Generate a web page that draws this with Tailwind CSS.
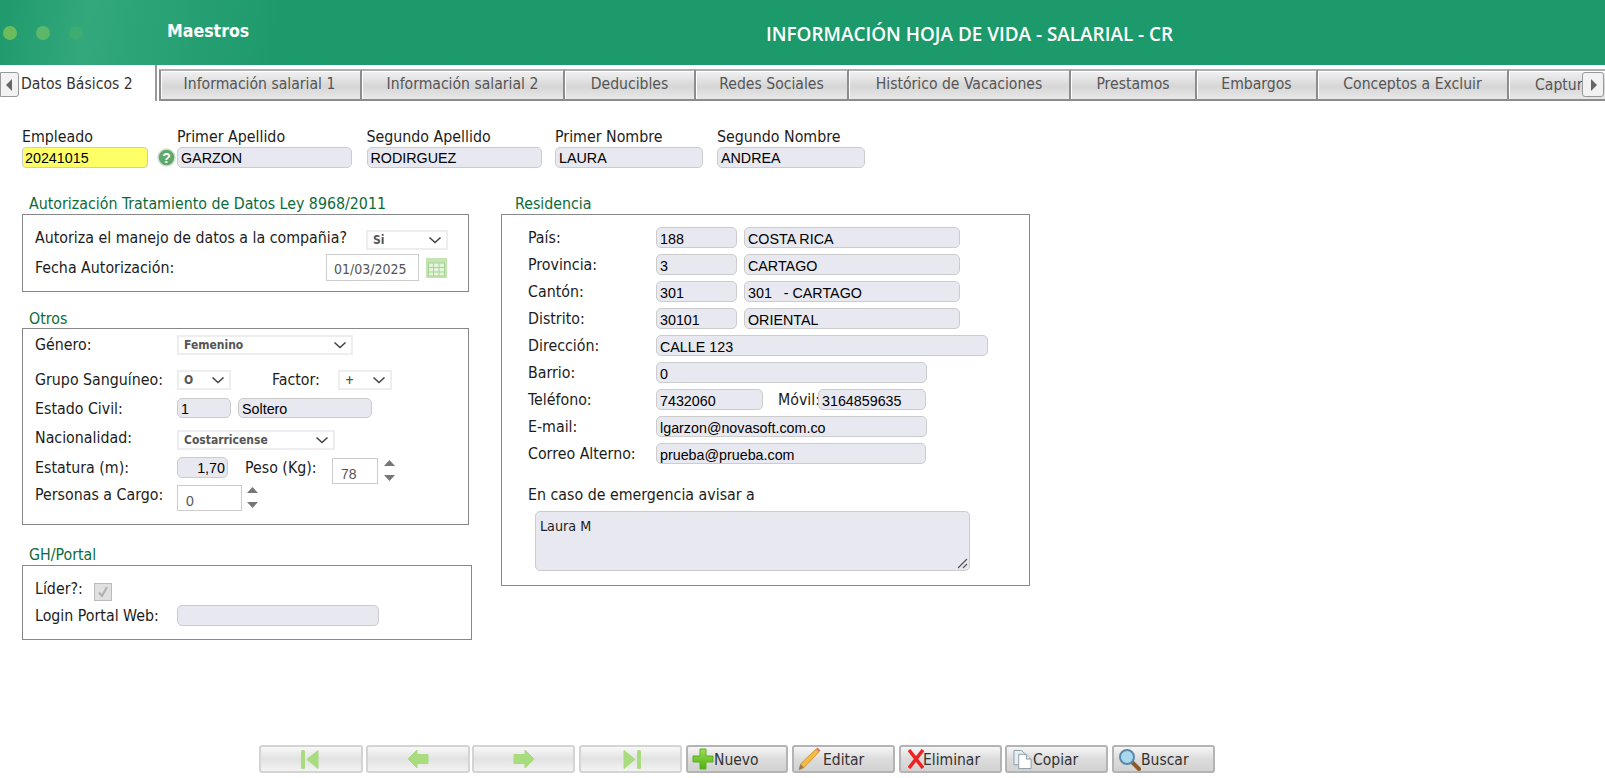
<!DOCTYPE html>
<html lang="es">
<head>
<meta charset="UTF-8">
<title>Información Hoja de Vida - Salarial - CR</title>
<script src="https://cdn.jsdelivr.net/npm/@tailwindcss/browser@4"></script>
</head>
<body class="bg-white h-[778px] overflow-hidden relative font-['DejaVu_Sans','Liberation_Sans',sans-serif] font-stretch-condensed text-[15.8px] text-[#1c1c1c]">

<!-- header -->
<header class="h-[65px] flex items-center bg-[linear-gradient(100deg,#1f9a6c_0px,#33a87c_90px,#2ba377_150px,#1d9a6b_280px)] relative">
  <div class="flex gap-[19px] pl-[3px] w-[167px]">
    <span class="w-[14px] h-[14px] rounded-full bg-[#6cbc5c]"></span>
    <span class="w-[14px] h-[14px] rounded-full bg-[#5cb868]"></span>
    <span class="w-[14px] h-[14px] rounded-full bg-[#3dac70]"></span>
  </div>
  <span class="text-white font-bold text-[17.6px] -mt-[3px]">Maestros</span>
  <h1 class="absolute left-[766px] top-[20px] text-white font-semibold text-[18.9px] font-['Open_Sans',sans-serif] font-stretch-normal whitespace-nowrap">INFORMACIÓN HOJA DE VIDA - SALARIAL - CR</h1>
</header>

<!-- tabs -->
<nav class="h-[36px] relative overflow-hidden flex items-end text-[15.6px] text-[#555]">
  <div class="w-[157px] h-[36px] shrink-0 bg-white border-r-2 border-r-[#999] pl-[21px] pt-[8px] text-[#333]">Datos Básicos 2</div>
  <div class="w-[2px] shrink-0"></div>
  <div class="w-[203px] h-[32px] shrink-0 flex items-center justify-center pr-[2px] border-2 border-[#8c8c8c] border-t-[#b0b0b0] shadow-[inset_1px_1px_0_#fff] bg-[linear-gradient(#f2f2f2,#d6d6d6_55%,#e8e8e8)]">Información salarial 1</div>
  <div class="w-[203px] h-[32px] shrink-0 flex items-center justify-center border-2 border-l-0 border-[#8c8c8c] border-t-[#b0b0b0] shadow-[inset_1px_1px_0_#fff] bg-[linear-gradient(#f2f2f2,#d6d6d6_55%,#e8e8e8)]">Información salarial 2</div>
  <div class="w-[131px] h-[32px] shrink-0 flex items-center justify-center border-2 border-l-0 border-[#8c8c8c] border-t-[#b0b0b0] shadow-[inset_1px_1px_0_#fff] bg-[linear-gradient(#f2f2f2,#d6d6d6_55%,#e8e8e8)]">Deducibles</div>
  <div class="w-[153px] h-[32px] shrink-0 flex items-center justify-center border-2 border-l-0 border-[#8c8c8c] border-t-[#b0b0b0] shadow-[inset_1px_1px_0_#fff] bg-[linear-gradient(#f2f2f2,#d6d6d6_55%,#e8e8e8)]">Redes Sociales</div>
  <div class="w-[222px] h-[32px] shrink-0 flex items-center justify-center border-2 border-l-0 border-[#8c8c8c] border-t-[#b0b0b0] shadow-[inset_1px_1px_0_#fff] bg-[linear-gradient(#f2f2f2,#d6d6d6_55%,#e8e8e8)]">Histórico de Vacaciones</div>
  <div class="w-[126px] h-[32px] shrink-0 flex items-center justify-center border-2 border-l-0 border-[#8c8c8c] border-t-[#b0b0b0] shadow-[inset_1px_1px_0_#fff] bg-[linear-gradient(#f2f2f2,#d6d6d6_55%,#e8e8e8)]">Prestamos</div>
  <div class="w-[121px] h-[32px] shrink-0 flex items-center justify-center border-2 border-l-0 border-[#8c8c8c] border-t-[#b0b0b0] shadow-[inset_1px_1px_0_#fff] bg-[linear-gradient(#f2f2f2,#d6d6d6_55%,#e8e8e8)]">Embargos</div>
  <div class="w-[191px] h-[32px] shrink-0 flex items-center justify-center border-2 border-l-0 border-[#8c8c8c] border-t-[#b0b0b0] shadow-[inset_1px_1px_0_#fff] bg-[linear-gradient(#f2f2f2,#d6d6d6_55%,#e8e8e8)]">Conceptos a Excluir</div>
  <div class="w-[120px] h-[32px] shrink-0 pl-[26px] pt-[3px] border-2 border-l-0 border-r-0 border-[#8c8c8c] border-t-[#b0b0b0] shadow-[inset_1px_1px_0_#fff] bg-[linear-gradient(#f2f2f2,#d6d6d6_55%,#e8e8e8)]">Capturas</div>
  <button class="absolute left-0 top-[7px] w-[19px] h-[25px] bg-[#f2f2f2] border border-[#999] rounded-r-[3px] flex items-center justify-center"><svg width="7" height="12" viewBox="0 0 7 12"><path d="M6 0v12L0 6z" fill="#666"/></svg></button>
  <button class="absolute left-[1582px] top-[7px] w-[22px] h-[25px] bg-[#f2f2f2] border border-[#999] rounded-[3px] flex items-center justify-center"><svg width="7" height="12" viewBox="0 0 7 12"><path d="M1 0v12l6-6z" fill="#666"/></svg></button>
</nav>

<main class="relative">
  <!-- empleado -->
  <section class="flex pl-[22px] pt-[26px] h-[93px]">
    <div class="w-[135px]">
      <div class="h-[20px] leading-[20px]">Empleado</div>
      <div class="w-[126px] h-[21px] rounded-[4px] border border-[#ccc] bg-[#ffff66] pl-[2px] font-['Liberation_Sans',sans-serif] font-stretch-normal text-[14.3px] text-black leading-[21px]">20241015</div>
    </div>
    <div class="w-[20px] pt-[20px]">
      <svg width="19" height="21" viewBox="0 0 19 21"><circle cx="9.500" cy="10.500" r="8.500" fill="#5fa86c" stroke="#cfe3d0" stroke-width="1.500"/><text x="9.500" y="15.500" font-size="14" font-weight="700" text-anchor="middle" fill="#fff" font-family="Liberation Sans">?</text></svg>
    </div>
    <div class="w-[189.5px]">
      <div class="h-[20px] leading-[20px]">Primer Apellido</div>
      <div class="w-[175px] h-[21px] rounded-[5px] border border-[#ccc] bg-[#e8e8f0] pl-[3px] font-['Liberation_Sans',sans-serif] font-stretch-normal text-[14.3px] text-black leading-[21px]">GARZON</div>
    </div>
    <div class="w-[188.5px]">
      <div class="h-[20px] leading-[20px]">Segundo Apellido</div>
      <div class="w-[175px] h-[21px] rounded-[5px] border border-[#ccc] bg-[#e8e8f0] pl-[3px] font-['Liberation_Sans',sans-serif] font-stretch-normal text-[14.3px] text-black leading-[21px]">RODIRGUEZ</div>
    </div>
    <div class="w-[162px]">
      <div class="h-[20px] leading-[20px]">Primer Nombre</div>
      <div class="w-[148px] h-[21px] rounded-[5px] border border-[#ccc] bg-[#e8e8f0] pl-[3px] font-['Liberation_Sans',sans-serif] font-stretch-normal text-[14.3px] text-black leading-[21px]">LAURA</div>
    </div>
    <div class="w-[150px]">
      <div class="h-[20px] leading-[20px]">Segundo Nombre</div>
      <div class="w-[148px] h-[21px] rounded-[5px] border border-[#ccc] bg-[#e8e8f0] pl-[3px] font-['Liberation_Sans',sans-serif] font-stretch-normal text-[14.3px] text-black leading-[21px]">ANDREA</div>
    </div>
  </section>

  <section class="flex items-start">
    <!-- left column -->
    <div class="w-[501px] pl-[22px]">
      <div class="pl-[7px] text-[#0b6b3a] h-[20px] leading-[20px]">Autorización Tratamiento de Datos Ley 8968/2011</div>
      <div class="w-[447px] h-[78px] border border-[#888] pl-[12px] relative">
        <div class="flex items-start pt-[7px] h-[35px]">
          <span class="w-[331px] h-[20px] leading-[20px] mt-[6px] whitespace-nowrap">Autoriza el manejo de datos a la compañia?</span>
          <span class="w-[82px] h-[20px] mt-[8px] border-2 border-[#eee] bg-white flex items-center justify-between pl-[5px] pr-[4px] text-[12px] font-bold text-[#555]">Si<svg width="14" height="8" viewBox="0 0 14 8"><path d="M1.500 1.500 7 6.500l5.500-5" fill="none" stroke="#444" stroke-width="1.600"/></svg></span>
        </div>
        <div class="flex items-start mt-[3px]">
          <span class="w-[291px] h-[20px] leading-[20px] mt-[5px]">Fecha Autorización:</span>
          <span class="w-[93px] h-[27px] mt-[1px] border border-[#ccc] bg-white text-[#555] text-[14px] pl-[7px] leading-[29px]">01/03/2025</span>
          <svg class="ml-[7px] mt-[5px]" width="21" height="20" viewBox="0 0 21 20"><rect width="21" height="20" fill="#c4e4b4"/><rect x="2.500" y="5" width="16" height="13" fill="#e6f4dc" stroke="#a4d494"/><path d="M7.500 5v13M13 5v13M2.500 9.500h16M2.500 14h16" stroke="#a4d494"/></svg>
        </div>
      </div>

      <div class="h-[17px]"></div>
      <div class="pl-[7px] text-[#0b6b3a] h-[19px] leading-[19px]">Otros</div>
      <div class="w-[447px] h-[197px] border border-[#888] pl-[12px] relative">
        <div class="flex items-center h-[20px] mt-[6px]">
          <span class="w-[142px]">Género:</span>
          <span class="w-[176px] h-[20px] border-2 border-[#eee] bg-white flex items-center justify-between pl-[5px] pr-[4px] text-[12px] font-bold text-[#555]">Femenino<svg width="14" height="8" viewBox="0 0 14 8"><path d="M1.500 1.500 7 6.500l5.500-5" fill="none" stroke="#444" stroke-width="1.600"/></svg></span>
        </div>
        <div class="flex items-center h-[20px] mt-[15px]">
          <span class="w-[142px]">Grupo Sanguíneo:</span>
          <span class="w-[54px] h-[20px] border-2 border-[#eee] bg-white flex items-center justify-between pl-[5px] pr-[4px] text-[12px] font-bold text-[#555]">O<svg width="14" height="8" viewBox="0 0 14 8"><path d="M1.500 1.500 7 6.500l5.500-5" fill="none" stroke="#444" stroke-width="1.600"/></svg></span>
          <span class="w-[66px] ml-[41px]">Factor:</span>
          <span class="w-[54px] h-[20px] border-2 border-[#eee] bg-white flex items-center justify-between pl-[5px] pr-[4px] text-[12px] font-bold text-[#555]">+<svg width="14" height="8" viewBox="0 0 14 8"><path d="M1.500 1.500 7 6.500l5.500-5" fill="none" stroke="#444" stroke-width="1.600"/></svg></span>
        </div>
        <div class="flex items-center h-[21px] mt-[7px]">
          <span class="w-[142px] mt-[2px]">Estado Civil:</span>
          <span class="w-[54px] h-[20px] rounded-[5px] border border-[#ccc] bg-[#e8e8f0] pl-[3px] font-['Liberation_Sans',sans-serif] font-stretch-normal text-[14.3px] text-black leading-[20px]">1</span>
          <span class="w-[134px] h-[20px] ml-[7px] rounded-[5px] border border-[#ccc] bg-[#e8e8f0] pl-[3px] font-['Liberation_Sans',sans-serif] font-stretch-normal text-[14.3px] text-black leading-[20px]">Soltero</span>
        </div>
        <div class="flex items-center h-[20px] mt-[11px]">
          <span class="w-[142px] -mt-[2px]">Nacionalidad:</span>
          <span class="w-[158px] h-[20px] mt-[2px] border-2 border-[#eee] bg-white flex items-center justify-between pl-[5px] pr-[4px] text-[12px] font-bold text-[#555]">Costarricense<svg width="14" height="8" viewBox="0 0 14 8"><path d="M1.500 1.500 7 6.500l5.500-5" fill="none" stroke="#444" stroke-width="1.600"/></svg></span>
        </div>
        <div class="flex items-start h-[28px] mt-[8px]">
          <span class="w-[142px] h-[20px] leading-[20px] mt-[1px]">Estatura (m):</span>
          <span class="w-[51px] h-[21px] rounded-[5px] border border-[#ccc] bg-[#e8e8f0] pr-[2px] text-right font-['Liberation_Sans',sans-serif] font-stretch-normal text-[14.3px] text-black leading-[21px]">1,70</span>
          <span class="ml-[17px] w-[87px] h-[20px] leading-[20px] mt-[1px]">Peso (Kg):</span>
          <span class="w-[46px] h-[26px] mt-[1px] border border-[#ccc] bg-white pl-[8px] text-[#555] font-['Liberation_Sans',sans-serif] font-stretch-normal text-[14px] leading-[30px]">78</span>
          <svg class="ml-[6px] mt-[3px]" width="11" height="21" viewBox="0 0 11 21"><path d="M5.500 0 11 6H0zM0 15h11l-5.500 6z" fill="#777"/></svg>
        </div>
        <div class="flex items-start h-[26px]">
          <span class="w-[142px] h-[20px] leading-[20px] whitespace-nowrap">Personas a Cargo:</span>
          <span class="w-[65px] h-[26px] border border-[#ccc] bg-white pl-[8px] text-[#555] font-['Liberation_Sans',sans-serif] font-stretch-normal text-[14px] leading-[30px]">0</span>
          <svg class="ml-[5px] mt-[2px]" width="11" height="21" viewBox="0 0 11 21"><path d="M5.500 0 11 6H0zM0 15h11l-5.500 6z" fill="#777"/></svg>
        </div>
      </div>

      <div class="h-[19px]"></div>
      <div class="pl-[7px] text-[#0b6b3a] h-[21px] leading-[22px]">GH/Portal</div>
      <div class="w-[450px] h-[75px] border border-[#888] pl-[12px]">
        <div class="flex items-start h-[34px] pt-[12px]">
          <span class="w-[59px] h-[20px] leading-[20px] mt-[1px]">Líder?:</span>
          <span class="w-[18px] h-[18px] mt-[5px] border border-[#bbb] bg-[#e0e0e0] flex items-center justify-center"><svg width="14" height="14" viewBox="0 0 14 14"><path d="M3 7.500 6 11l5-9" fill="none" stroke="#b0b0b0" stroke-width="2"/></svg></span>
        </div>
        <div class="flex items-center h-[21px] mt-[5px]">
          <span class="w-[142px] whitespace-nowrap">Login Portal Web:</span>
          <span class="w-[202px] h-[21px] rounded-[5px] border border-[#ccc] bg-[#e8e8f0]"></span>
        </div>
      </div>
    </div>

    <!-- residencia -->
    <div class="w-[529px]">
      <div class="pl-[14px] text-[#0b6b3a] h-[20px] leading-[20px]">Residencia</div>
      <div class="h-[372px] border border-[#888] pl-[26px] pt-[12px] flex flex-col">
        <div class="flex h-[21px] items-center mb-[6px]"><span class="w-[128px]">País:</span><span class="w-[81px] h-[21px] rounded-[5px] border border-[#ccc] bg-[#e8e8f0] pl-[3px] font-['Liberation_Sans',sans-serif] font-stretch-normal text-[14.3px] text-black leading-[22px]">188</span><span class="ml-[7px] w-[216px] h-[21px] rounded-[5px] border border-[#ccc] bg-[#e8e8f0] pl-[3px] font-['Liberation_Sans',sans-serif] font-stretch-normal text-[14.3px] text-black leading-[22px]">COSTA RICA</span></div>
        <div class="flex h-[21px] items-center mb-[6px]"><span class="w-[128px]">Provincia:</span><span class="w-[81px] h-[21px] rounded-[5px] border border-[#ccc] bg-[#e8e8f0] pl-[3px] font-['Liberation_Sans',sans-serif] font-stretch-normal text-[14.3px] text-black leading-[22px]">3</span><span class="ml-[7px] w-[216px] h-[21px] rounded-[5px] border border-[#ccc] bg-[#e8e8f0] pl-[3px] font-['Liberation_Sans',sans-serif] font-stretch-normal text-[14.3px] text-black leading-[22px]">CARTAGO</span></div>
        <div class="flex h-[21px] items-center mb-[6px]"><span class="w-[128px]">Cantón:</span><span class="w-[81px] h-[21px] rounded-[5px] border border-[#ccc] bg-[#e8e8f0] pl-[3px] font-['Liberation_Sans',sans-serif] font-stretch-normal text-[14.3px] text-black leading-[22px]">301</span><span class="ml-[7px] w-[216px] h-[21px] rounded-[5px] border border-[#ccc] bg-[#e8e8f0] pl-[3px] font-['Liberation_Sans',sans-serif] font-stretch-normal text-[14.3px] text-black leading-[22px] whitespace-pre">301   - CARTAGO</span></div>
        <div class="flex h-[21px] items-center mb-[6px]"><span class="w-[128px]">Distrito:</span><span class="w-[81px] h-[21px] rounded-[5px] border border-[#ccc] bg-[#e8e8f0] pl-[3px] font-['Liberation_Sans',sans-serif] font-stretch-normal text-[14.3px] text-black leading-[22px]">30101</span><span class="ml-[7px] w-[216px] h-[21px] rounded-[5px] border border-[#ccc] bg-[#e8e8f0] pl-[3px] font-['Liberation_Sans',sans-serif] font-stretch-normal text-[14.3px] text-black leading-[22px]">ORIENTAL</span></div>
        <div class="flex h-[21px] items-center mb-[6px]"><span class="w-[128px]">Dirección:</span><span class="w-[332px] h-[21px] rounded-[5px] border border-[#ccc] bg-[#e8e8f0] pl-[3px] font-['Liberation_Sans',sans-serif] font-stretch-normal text-[14.3px] text-black leading-[22px]">CALLE 123</span></div>
        <div class="flex h-[21px] items-center mb-[6px]"><span class="w-[128px]">Barrio:</span><span class="w-[271px] h-[21px] rounded-[5px] border border-[#ccc] bg-[#e8e8f0] pl-[3px] font-['Liberation_Sans',sans-serif] font-stretch-normal text-[14.3px] text-black leading-[22px]">0</span></div>
        <div class="flex h-[21px] items-center mb-[6px]"><span class="w-[128px]">Teléfono:</span><span class="w-[107px] h-[21px] rounded-[5px] border border-[#ccc] bg-[#e8e8f0] pl-[3px] font-['Liberation_Sans',sans-serif] font-stretch-normal text-[14.3px] text-black leading-[22px]">7432060</span><span class="ml-[15px] w-[40px] whitespace-nowrap">Móvil:</span><span class="w-[108px] h-[21px] rounded-[5px] border border-[#ccc] bg-[#e8e8f0] pl-[3px] font-['Liberation_Sans',sans-serif] font-stretch-normal text-[14.3px] text-black leading-[22px] relative">3164859635</span></div>
        <div class="flex h-[21px] items-center mb-[6px]"><span class="w-[128px]">E-mail:</span><span class="w-[271px] h-[21px] rounded-[5px] border border-[#ccc] bg-[#e8e8f0] pl-[3px] font-['Liberation_Sans',sans-serif] font-stretch-normal text-[14.3px] text-black leading-[22px]">lgarzon@novasoft.com.co</span></div>
        <div class="flex h-[21px] items-center"><span class="w-[128px] whitespace-nowrap">Correo Alterno:</span><span class="w-[270px] h-[21px] rounded-[5px] border border-[#ccc] bg-[#e8e8f0] pl-[3px] font-['Liberation_Sans',sans-serif] font-stretch-normal text-[14.3px] text-black leading-[22px]">prueba@prueba.com</span></div>
        <div class="mt-[21px] h-[20px] leading-[20px]">En caso de emergencia avisar a</div>
        <div class="relative ml-[7px] mt-[6px] w-[435px] h-[60px] rounded-[5px] border border-[#ccc] bg-[#e8e8f0] pl-[4px] pt-[6px] text-[14.2px] leading-[16px] text-[#222]">Laura M
          <svg class="absolute right-[1px] bottom-[1px]" width="11" height="11" viewBox="0 0 11 11"><path d="M1 10 10 1M6 10l4-4" stroke="#555" stroke-width="1.200"/></svg>
        </div>
      </div>
    </div>
  </section>
</main>

<!-- toolbar -->
<footer class="absolute left-[259px] top-[745px] flex h-[28px] text-[15.5px] text-[#333]">
  <button class="w-[104px] h-[28px] mr-[3px] rounded-[3px] border-2 border-[#d4d4d4] bg-[linear-gradient(#f8f8f8,#e2e2e2_50%,#f2f2f2)] flex items-center justify-center"><svg width="22" height="21" viewBox="0 0 22 21"><rect x="1" y="1" width="4" height="19" rx="1.500" fill="#a8dc7e"/><path d="M7 10.500 18 1.500v18z" fill="#a8dc7e" stroke="#a8dc7e" stroke-linejoin="round"/></svg></button>
  <button class="w-[104px] h-[28px] mr-[2px] rounded-[3px] border-2 border-[#d4d4d4] bg-[linear-gradient(#f8f8f8,#e2e2e2_50%,#f2f2f2)] flex items-center justify-center"><svg width="22" height="20" viewBox="0 0 22 20"><path d="M1 10 10 1v4.500h11v9H10V19z" fill="#a8dc7e" stroke="#a8dc7e" stroke-linejoin="round"/></svg></button>
  <button class="w-[103px] h-[28px] mr-[4px] rounded-[3px] border-2 border-[#d4d4d4] bg-[linear-gradient(#f8f8f8,#e2e2e2_50%,#f2f2f2)] flex items-center justify-center"><svg width="22" height="20" viewBox="0 0 22 20"><path d="M21 10 12 1v4.500H1v9h11V19z" fill="#a8dc7e" stroke="#a8dc7e" stroke-linejoin="round"/></svg></button>
  <button class="w-[103px] h-[28px] mr-[4px] rounded-[3px] border-2 border-[#d4d4d4] bg-[linear-gradient(#f8f8f8,#e2e2e2_50%,#f2f2f2)] flex items-center justify-center"><svg width="22" height="21" viewBox="0 0 22 21"><rect x="17" y="1" width="4" height="19" rx="1.500" fill="#a8dc7e"/><path d="M15 10.500 4 1.500v18z" fill="#a8dc7e" stroke="#a8dc7e" stroke-linejoin="round"/></svg></button>
  <button class="w-[102px] h-[28px] mr-[4px] rounded-[3px] border-2 border-[#b4b4b4] bg-[linear-gradient(#f6f6f6,#dcdcdc_50%,#d2d2d2)] flex items-center pl-[4px]"><svg width="22" height="22" viewBox="0 0 22 22"><defs><linearGradient id="plus" x1="0" y1="0" x2="0" y2="1"><stop offset="0" stop-color="#9ade55"/><stop offset="1" stop-color="#4fb012"/></linearGradient></defs><path d="M8 1h6v7h7v6h-7v7H8v-7H1V8h7z" fill="url(#plus)" stroke="#5bb01c" stroke-linejoin="round"/></svg><span class="pt-[4px]">Nuevo</span></button>
  <button class="w-[103px] h-[28px] mr-[4px] rounded-[3px] border-2 border-[#b4b4b4] bg-[linear-gradient(#f6f6f6,#dcdcdc_50%,#d2d2d2)] flex items-center pl-[3px]"><svg class="mr-[2px]" width="24" height="24" viewBox="0 0 24 24"><path d="M2 23l1.500-6L19 2l3 3L7 20.500z" fill="#f5b942" stroke="#c49434" stroke-width=".8"/><path d="M19 2l1.500-1.500 3 3L22 5z" fill="#e57373"/><path d="M2 23l1.500-6L7 20.500z" fill="#9a7a50"/></svg><span class="pt-[4px]">Editar</span></button>
  <button class="w-[103px] h-[28px] mr-[3px] rounded-[3px] border-2 border-[#b4b4b4] bg-[linear-gradient(#f6f6f6,#dcdcdc_50%,#d2d2d2)] flex items-center pl-[7px]"><svg width="16" height="20" viewBox="0 0 16 20" class="-mr-[1px]"><path d="M1 1l14 18M15 1 1 19" stroke="#ee2222" stroke-width="3.500"/></svg><span class="pt-[4px]">Eliminar</span></button>
  <button class="w-[103px] h-[28px] mr-[4px] rounded-[3px] border-2 border-[#b4b4b4] bg-[linear-gradient(#f6f6f6,#dcdcdc_50%,#d2d2d2)] flex items-center pl-[6px]"><svg width="20" height="21" viewBox="0 0 21 21"><path d="M1 1h8l3 3v12H1z" fill="#e8eef2" stroke="#8a9aa4"/><path d="M6 5h8l5 5v10H6z" fill="#fff" stroke="#8a9aa4"/><path d="M14 5v5h5" fill="#dce6ea" stroke="#8a9aa4"/></svg><span class="pt-[4px]">Copiar</span></button>
  <button class="w-[103px] h-[28px] rounded-[3px] border-2 border-[#b4b4b4] bg-[linear-gradient(#f6f6f6,#dcdcdc_50%,#d2d2d2)] flex items-center pl-[4px]"><svg width="23" height="23" viewBox="0 0 23 23"><path d="M13 13l8 8" stroke="#8a5a2a" stroke-width="4" stroke-linecap="round"/><circle cx="9" cy="9" r="7" fill="#a8d8f0" stroke="#5a88a8" stroke-width="2"/></svg><span class="pt-[4px]">Buscar</span></button>
</footer>
</body>
</html>
